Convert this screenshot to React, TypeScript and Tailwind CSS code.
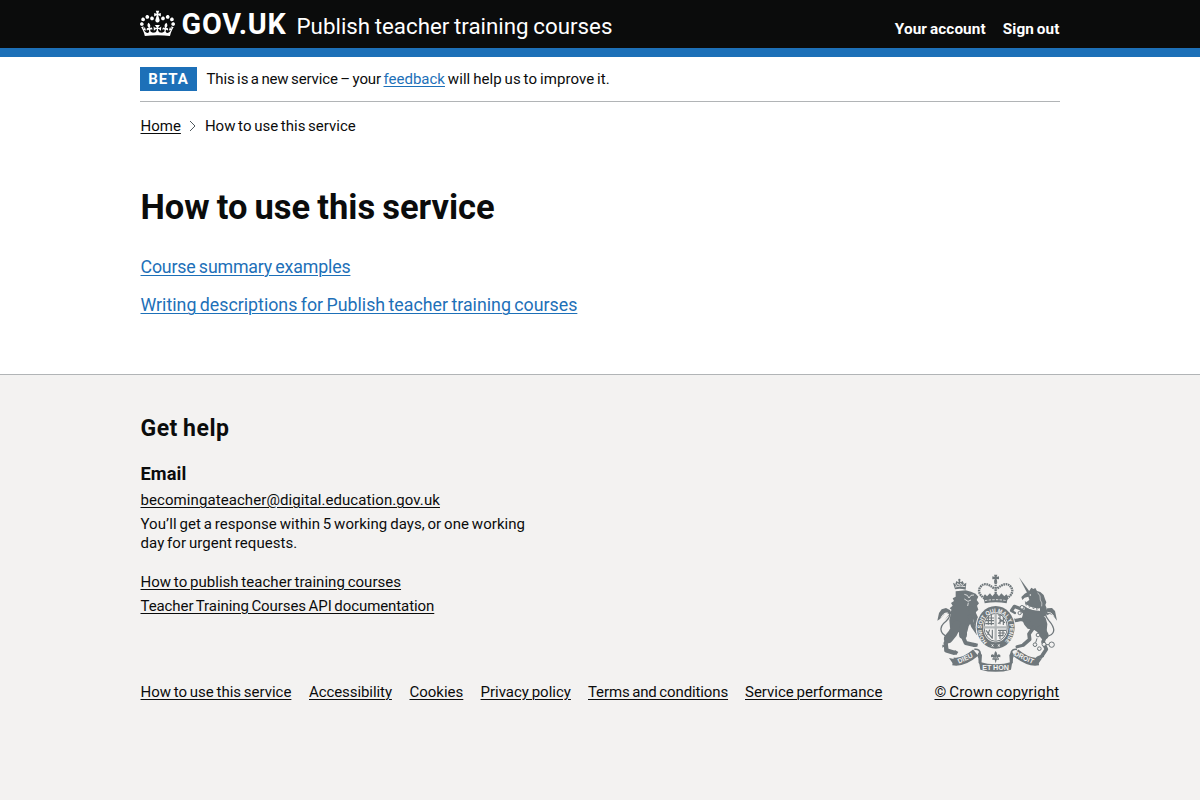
function GovCrown() {
  return (
    <svg viewBox="0 0 132 97" className="h-[27px] w-[35px] shrink-0" fill="currentColor" fillRule="evenodd" aria-hidden="true">
      <path d="M25 30.2c3.5 1.5 7.7-.2 9.1-3.7 1.5-3.6-.2-7.8-3.9-9.2-3.6-1.4-7.6.3-9.1 3.9-1.4 3.5.3 7.5 3.9 9zM9 39.5c3.6 1.5 7.8-.2 9.2-3.7 1.5-3.6-.2-7.8-3.9-9.1-3.6-1.5-7.6.2-9.1 3.8-1.4 3.5.3 7.5 3.8 9zM4.4 57.2c3.5 1.5 7.7-.2 9.1-3.8 1.5-3.6-.2-7.7-3.9-9.1-3.5-1.5-7.6.3-9.1 3.8-1.4 3.5.3 7.6 3.9 9.1zm38.3-21.4c3.5 1.5 7.7-.2 9.1-3.8 1.5-3.6-.2-7.7-3.9-9.1-3.6-1.5-7.6.3-9.1 3.8-1.3 3.6.4 7.7 3.9 9.1zm64.4-5.6c-3.6 1.5-7.8-.2-9.1-3.7-1.5-3.6.2-7.8 3.8-9.2 3.6-1.4 7.7.3 9.2 3.9 1.3 3.5-.4 7.5-3.9 9zm15.9 9.3c-3.6 1.5-7.7-.2-9.1-3.7-1.5-3.6.2-7.8 3.7-9.1 3.6-1.5 7.7.2 9.2 3.8 1.5 3.5-.3 7.5-3.8 9zm4.7 17.7c-3.6 1.5-7.8-.2-9.2-3.8-1.5-3.6.2-7.7 3.9-9.1 3.6-1.5 7.7.3 9.2 3.8 1.3 3.5-.4 7.6-3.9 9.1zM89.3 35.8c-3.6 1.5-7.8-.2-9.2-3.8-1.4-3.6.2-7.7 3.9-9.1 3.6-1.5 7.7.3 9.2 3.8 1.4 3.6-.3 7.7-3.9 9.1zM69.7 17.7l8.9 4.7V9.3l-8.9 2.8c-.2-.3-.5-.6-.9-.9L72.4 0H59.6l3.5 11.2c-.3.3-.6.5-.9.9l-8.8-2.8v13.1l8.8-4.7c.3.3.6.7.9.9l-5 15.4v.1c-.2.8-.4 1.6-.4 2.4 0 4.1 3.1 7.5 7 8.1h.2c.3 0 .7.1 1 .1.4 0 .7 0 1-.1h.2c4-.6 7.1-4.1 7.1-8.1 0-.8-.1-1.7-.4-2.4V34l-5.1-15.4c.4-.2.7-.6 1-.9zM66 92.8c16.9 0 32.8 1.1 47.1 3.2 4-16.9 8.9-26.7 14-33.5l-9.6-3.4c1 4.9 1.1 7.2 0 10.2-1.5-1.4-3-4.3-4.2-8.7L108.6 76c2.8-2 5-3.2 7.5-3.3-4.4 9.4-10 11.9-13.6 11.2-4.3-.8-6.3-4.6-5.6-7.9 1-4.7 5.7-5.9 8-.5 4.3-8.7-3-11.4-7.6-8.8 7.1-7.2 7.9-13.5 2.1-21.1-8 6.1-8.1 12.3-4.5 20.8-4.7-5.4-12.1-2.5-9.5 6.2 3.4-5.2 7.9-2 7.2 3.1-.6 4.3-6.4 7.8-13.5 7.2-10.3-.9-10.9-8-11.2-13.8 2.5-.5 7.1 1.8 11 7.3L80.2 60c-4.1 4.4-8 5.3-12.3 5.4 1.4-4.4 8-11.6 8-11.6H55.5s6.4 7.2 7.9 11.6c-4.2-.1-8-1-12.3-5.4l1.4 16.4c3.9-5.5 8.5-7.7 10.9-7.3-.3 5.8-.9 12.8-11.1 13.8-7.2.6-12.9-2.9-13.5-7.2-.7-5 3.8-8.3 7.1-3.1 2.7-8.7-4.6-11.6-9.4-6.2 3.7-8.5 3.6-14.7-4.6-20.8-5.8 7.6-5 13.9 2.2 21.1-4.7-2.6-11.9.1-7.7 8.8 2.3-5.5 7.1-4.2 8.1.5.7 3.3-1.3 7.1-5.7 7.9-3.5.7-9-1.8-13.5-11.2 2.5.1 4.7 1.3 7.5 3.3l-4.7-15.4c-1.2 4.4-2.7 7.2-4.3 8.7-1.1-3-.9-5.3 0-10.2l-9.5 3.4c5 6.9 9.9 16.7 14 33.5 14.8-2.1 30.8-3.2 47.7-3.2z" />
    </svg>
  );
}

function RoyalArms() {
  return (
    <svg viewBox="6 12 360 294" className="-ml-px h-[98px] w-[120px] self-center text-[#6f777b]" fill="currentColor" aria-hidden="true">
      {/* lion */}
      <path d="M62 64l30-3 16 4 14 6 8 9-5 10 7 10-6 7 4 12-7 7-3 14-10 14-9 15-4 16-32 2-20-14-2-22 4-18-6-3 9-10-6-5 9-8-5-8 9-6-4-8 9-5z" />
      <g fill="none" stroke="currentColor" strokeLinecap="round" strokeLinejoin="round">
        <path d="M66 165L53 190L40 206" strokeWidth="27" />
        <path d="M42 200L32 220L34 238" strokeWidth="13" />
        <path d="M34 241L56 248" strokeWidth="13" />
        <path d="M84 172L84 194" strokeWidth="24" />
        <path d="M82 196L92 219L118 225" strokeWidth="12" />
        <path d="M108 116L122 146L128 172" strokeWidth="16" />
        <path d="M104 140L114 168L129 190" strokeWidth="12" />
      </g>
      <path d="M22 224l10 3-10 6zM60 240l10 6-6 9-12-4zM116 218l13 3-2 9-12 1z" />
      <path d="M88 73l9 3 5 8 6-8 9-1M88 87l11 7 9-4M100 98l-2 10" stroke="#f3f2f1" strokeWidth="2.4" fill="none" />
      <path d="M60 58l-6-20 7 4 3-9 6 4 3-7 4 7 6-4 4 9 7-4-2 21q-17-5-32-1z" />
      <circle cx="73" cy="30" r="3.5" />
      <path d="M60 51q16-5 31-1M61 44l4 3 3-7 5 6 4-6 5 6 4-3" stroke="#f3f2f1" strokeWidth="2.5" fill="none" />
      <path d="M52 202Q24 200 19 184T33 154q18-18 8-33" stroke="currentColor" strokeWidth="4" fill="none" />
      <path d="M43 132l-11-4-18 20-7 4 5-23 8-11 13-4 13 7-1 12-8 8-9 10z" />
      <path d="M38 128q-12-1-20 14" stroke="#f3f2f1" strokeWidth="2.5" fill="none" />
      {/* unicorn */}
      <path d="M252 22l31 42-6 6z" />
      <path d="M262 90l-3-9 10-10 13-7 7-11 6 4 6-3 5 9 10 3 10 9 4 12 4 10-3 8 4 10-3 10-2 14-40 2-20-12-2-20 3-11 12-8-3-10-11 3z" />
      <path d="M268 118l22 8 26 2 16 16 5 18-2 22-20 8-17-12-20-4-10-12-8-18z" />
      <g fill="none" stroke="currentColor" strokeLinecap="round" strokeLinejoin="round">
        <path d="M278 138L256 116L238 109L231 120" strokeWidth="10" />
        <path d="M228 122L240 129" strokeWidth="7" />
        <path d="M280 154L258 148L240 152L226 145" strokeWidth="10" />
        <path d="M318 178L328 196" strokeWidth="26" />
        <path d="M330 200L324 216L334 238L322 256" strokeWidth="11" />
        <path d="M322 258L308 264" strokeWidth="10" />
        <path d="M296 172L282 192L284 208L266 224" strokeWidth="11" />
        <path d="M264 226L246 230" strokeWidth="9" />
      </g>
      <circle cx="286" cy="75" r="2.3" fill="#f3f2f1" />
      <path d="M308 68q10 8 8 22 7 8 4 19" stroke="#f3f2f1" strokeWidth="1.8" fill="none" />
      <path d="M267 103q18 16 48 16" stroke="#f3f2f1" strokeWidth="8" fill="none" />
      <path d="M266 108q20 17 48 16M271 94l2 12 8-7 2 13 9-8 3 13 9-9 1 11 8-7" stroke="currentColor" strokeWidth="2.3" fill="none" />
      <path d="M332 200q22-4 24-17t-15-32q-17-21-7-32" stroke="currentColor" strokeWidth="4" fill="none" />
      <path d="M335 136l-5-12 7-9 14-1 9 9 6 29-13-17-9-3z" />
      <path d="M337 127q12-2 20 12" stroke="#f3f2f1" strokeWidth="2.5" fill="none" />
      <g fill="#f3f2f1" stroke="currentColor" strokeWidth="3">
        <circle cx="261" cy="112" r="5.5" /><circle cx="254" cy="129" r="5" /><circle cx="309" cy="195" r="5.5" />
        <circle cx="300" cy="224" r="5.5" /><circle cx="313" cy="236" r="5.5" /><circle cx="327" cy="223" r="6" />
        <circle cx="350" cy="224" r="8" />
        <path d="M333 224h9M306 205l-4 13" />
      </g>
      <g transform="translate(-45 -15)">
        {/* crown */}
        <path d="M194 101Q168 83 182 65t42 7M260 101q26-18 12-36t-42 7" stroke="currentColor" strokeWidth="7" strokeDasharray="5 2" fill="none" />
        <path d="M227 45v54" stroke="currentColor" strokeWidth="7" strokeDasharray="5 2" />
        <path d="M222 29h10l-2 7 7-2v9l-7-1 2 11h-10l2-11-7 1v-9l7 2z" />
        <path d="M190 94l5-6 6 6 9-9 7 9 10-12 10 12 7-9 9 9 6-6 5 6-4 21q-33-6-66 0z" />
        <path d="M195 107q32-6 64 0" stroke="#f3f2f1" strokeWidth="2.5" strokeDasharray="7 4" fill="none" />
        {/* garter and shield */}
        <ellipse cx="227" cy="187" rx="60" ry="67" fill="#f3f2f1" />
        <ellipse cx="227" cy="187" rx="57" ry="64" />
        <ellipse cx="227" cy="187" rx="38" ry="45" fill="#f3f2f1" />
        <path id="garter" d="M204 233A42 49 0 1 1 250 233" fill="none" />
        <text fontSize="18" fontWeight="700" fill="#f3f2f1" className="font-['Liberation_Sans',sans-serif]">
          <textPath href="#garter" startOffset="3" textLength="228" lengthAdjust="spacingAndGlyphs">HONI SOIT QUI MAL Y PENSE</textPath>
        </text>
        <path d="M215 238l5 7M220 238l-5 7M234 238l5 7M239 238l-5 7" stroke="#f3f2f1" strokeWidth="2.5" />
        <ellipse cx="227" cy="187" rx="35" ry="42" fill="none" stroke="currentColor" strokeWidth="3" />
        <path d="M192 187h70M227 145v84" stroke="#b4b8b9" strokeWidth="7" />
        <path d="M199 159h23M198 167h24M196 176h26M205 151v28M214 147v34M234 150h15M234 158l21 15M234 176l21-16M240 150v28M250 156v24M234 196h24M234 204h21M234 212h15M240 194v28M249 194v20M198 196l19 24M209 194l-6 16M217 194v27" stroke="currentColor" strokeWidth="3.4" />
      </g>
      {/* motto ribbon */}
      <path d="M42 264l18 4 8 14-12 2zM322 264l-18 4-8 14 12 2z" />
      <path d="M54 274Q84 280 122 248M310 274Q280 280 242 248" stroke="currentColor" strokeWidth="24" fill="none" />
      <path d="M118 238q17-2 18 14l-2 28M246 238q-17-2-18 14l2 28" stroke="currentColor" strokeWidth="5" fill="none" />
      <path d="M133 245q-9 8-3 20l1 14 8 5 2-29zM231 245q9 8 3 20l-1 14-8 5-2-29z" />
      <path d="M132 275q50 15 100 0l-4 24q-46 13-92 0z" />
      <path d="M182 243q9 11 0 22-9-11 0-22zM168 255q8-7 12 6l-4 7q1-9-8-6zM196 255q-8-7-12 6l4 7q-1-9 8-6zM172 265h20v4h-20zM179 269h6l-3 11z" />
      <g fill="#f3f2f1" fontSize="21" fontWeight="700" className="font-['Liberation_Sans',sans-serif]">
        <text transform="translate(72 281) rotate(-25)" textLength="47" lengthAdjust="spacingAndGlyphs">DIEU</text>
        <text x="142" y="300" textLength="80" lengthAdjust="spacingAndGlyphs">ET HON</text>
        <text transform="translate(236 256) rotate(25)" textLength="62" lengthAdjust="spacingAndGlyphs">DROIT</text>
      </g>
    </svg>
  );
}

const footerLinks = [
  { label: "How to use this service", style: "w-[151px]" },
  { label: "Accessibility", style: "w-[83px] tracking-[-0.08px]" },
  { label: "Cookies", style: "w-[53.5px]" },
  { label: "Privacy policy", style: "w-[90px]" },
  { label: "Terms and conditions", style: "w-[139.5px] tracking-[-0.12px]" },
  { label: "Service performance", style: "w-[137px]" },
];

const link = "underline decoration-1 underline-offset-[1.5px] [text-decoration-skip-ink:auto]";

export default function App() {
  return (
    <div className="flex min-h-screen flex-col bg-white font-[Roboto,sans-serif] text-[15px] leading-[19.2px] text-[#0b0c0c] [word-spacing:-1px]">
      <header className="h-12 bg-[#0b0c0c] text-white">
        <div className="mx-auto flex h-full w-[920px] items-start justify-between">
          <div className="flex items-start">
            <a href="#" className="flex pt-[10px]">
              <GovCrown />
              <span className="ml-[6.5px] w-[115px] text-[28.75px] leading-7 font-bold tracking-[0.8px]">GOV.UK</span>
            </a>
            <a href="#" className="pt-[12px] text-[22.3px] leading-7 tracking-[0.02px]">Publish teacher training courses</a>
          </div>
          <nav className="flex gap-[17px] pt-[20px] pr-[0.5px] text-[15.3px] font-bold tracking-[0.1px]">
            <a href="#">Your account</a>
            <a href="#">Sign out</a>
          </nav>
        </div>
      </header>
      <div className="h-[9px] bg-[#1d70b8]" />

      <div className="mx-auto w-[920px]">
        <div className="flex h-[44.6px] items-start border-b border-[#b1b4b6] pt-[10px]">
          <strong className="flex h-6 w-[57px] items-center justify-center bg-[#1d70b8] pt-px text-[15px] font-bold tracking-[1px] text-white">BETA</strong>
          <p className="ml-[9.5px] pt-[3px]">
            <span className="tracking-[-0.14px]">This is a new service – your </span>
            <a href="#" className={`${link} text-[#1d70b8]`}>feedback</a>
            <span className="tracking-[0.09px]"> will help us to improve it.</span>
          </p>
        </div>
        <nav className="flex items-center pt-[15px]">
          <a href="#" className={`${link} pl-[0.5px]`}>Home</a>
          <svg viewBox="0 0 7 12" className="mr-[8.5px] ml-[8.5px] h-3 w-[7px] text-[#505a5f]" fill="none" stroke="currentColor" aria-hidden="true">
            <path d="M1 1l5 5-5 5" />
          </svg>
          <span>How to use this service</span>
        </nav>

        <main className="h-[238.4px] pt-[51.4px] pl-[0.5px]">
          <h1 className="text-[34.5px] leading-[40px] font-bold [word-spacing:-1.5px]">How to use this service</h1>
          <p className="mt-[28px] text-[17.8px] leading-6 tracking-[-0.17px] text-[#1d70b8]">
            <a href="#" className={link}>Course summary examples</a>
          </p>
          <p className="mt-[14.2px] text-[17.8px] leading-6 text-[#1d70b8]">
            <a href="#" className={link}>Writing descriptions for Publish teacher training courses</a>
          </p>
        </main>
      </div>

      <footer className="grow border-t border-[#b1b4b6] bg-[#f3f2f1]">
        <div className="mx-auto flex w-[920px] justify-between pt-[39px] pl-[0.5px]">
          <div className="flex flex-col">
            <h2 className="text-[23px] leading-[29px] font-bold tracking-[0.5px]">Get help</h2>
            <h3 className="mt-[18.6px] text-[18.2px] leading-6 font-bold tracking-[0.1px]">Email</h3>
            <ul className="mt-[5.4px] flex flex-col gap-[4.8px]">
              <li className="tracking-[0.08px]"><a href="#" className={link}>becomingateacher@digital.education.gov.uk</a></li>
              <li className="tracking-[0.06px]">You’ll get a response within 5 working days, or one working<br />day for urgent requests.</li>
            </ul>
            <ul className="mt-[19px] flex flex-col gap-[4.8px]">
              <li className="tracking-[0.03px]"><a href="#" className={link}>How to publish teacher training courses</a></li>
              <li className="tracking-[-0.08px]"><a href="#" className={link}>Teacher Training Courses API documentation</a></li>
            </ul>
            <ul className="mt-[67px] flex gap-[17.5px] whitespace-nowrap">
              {footerLinks.map(({ label, style }) => (
                <li key={label} className={style}><a href="#" className={link}>{label}</a></li>
              ))}
            </ul>
          </div>
          <a href="#" className="flex w-[125.5px] flex-col pt-[160px] whitespace-nowrap">
            <RoyalArms />
            <span className={`${link} mt-[11px] tracking-[0.16px]`}>© Crown copyright</span>
          </a>
        </div>
      </footer>
    </div>
  );
}
